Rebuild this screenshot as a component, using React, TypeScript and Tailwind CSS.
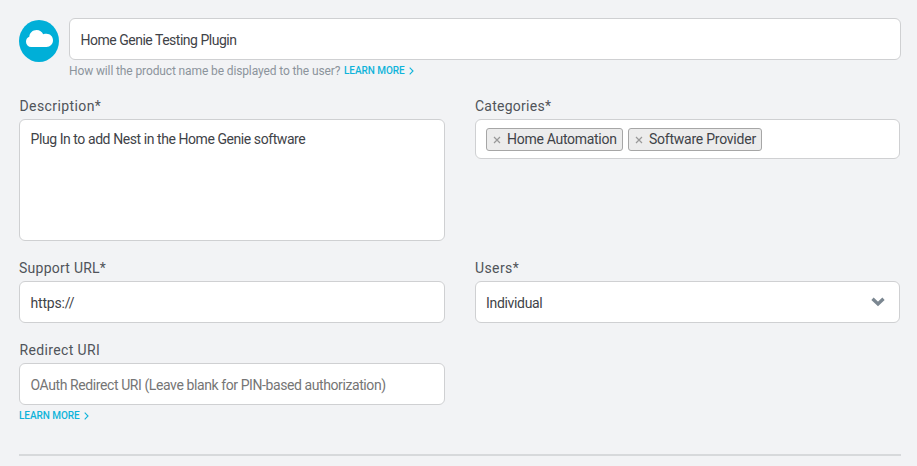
import React from "react";

function Label({ children, className = "" }: { children: React.ReactNode; className?: string }) {
  return <div className={`h-6 whitespace-nowrap text-[14px] leading-[23px] text-[#50545a] ${className}`}>{children}</div>;
}

const box = "flex w-full items-center rounded-[6px] border border-[#cfd0d2] bg-white whitespace-nowrap text-[14px] text-[#3f4348]";

function LearnMore() {
  return (
    <span className="inline-flex items-center gap-[4px] text-[10px] font-medium leading-[12px] text-[#0fb3da]">
      <span className="tracking-[-0.05px]">LEARN MORE</span>
      <svg width="5" height="8" viewBox="0 0 5 8" fill="none" stroke="currentColor" strokeWidth="1.1">
        <path d="M0.7 0.7 4 4 0.7 7.3" />
      </svg>
    </span>
  );
}

function Tag({ children, className }: { children: string; className: string }) {
  return (
    <span className={`flex h-[23px] items-center rounded-[3px] border border-[#a6a6a6] bg-[#ececec] pl-[6px] ${className}`}>
      <svg width="8" height="8" viewBox="0 0 8 8" stroke="#999" strokeWidth="1.2" className="mr-[6px] mt-px shrink-0">
        <path d="M1 1 7 7M7 1 1 7" />
      </svg>
      {children}
    </span>
  );
}

export default function App() {
  return (
    <main className="h-[466px] w-[917px] overflow-hidden bg-[#f2f3f5] pl-[19px] pr-4 pt-[18px] font-['Roboto','Liberation_Sans',sans-serif]">
      <header className="flex h-[77px]">
        <div className="mt-[2px] flex h-[42px] w-10 shrink-0 items-center justify-center rounded-[50%] bg-[#00afd8]">
          <svg width="27" height="17" viewBox="0 0 27 17" fill="white" className="mb-[5px]">
            <path d="M5.2 17A5.2 5.2 0 0 1 0 11.8C0 9.4 1.3 7.5 3.3 6.8C3.5 2.9 6.7 0 10.6 0C13.7 0 16 1.6 17.2 4.3C18.3 3.9 19.4 3.8 20.5 3.8C24.2 3.8 27 6.7 27 10.3C27 14.1 24.2 17 20.5 17Z" />
          </svg>
        </div>
        <div className="ml-[10px] w-[832px]">
          <div className={`${box} h-[42px] pl-[10.5px] pt-[3px] tracking-[-0.49px]`}>Home Genie Testing Plugin</div>
          <div className="flex h-[21px] items-center whitespace-nowrap text-[12px] text-[#8c949c]">
            <span className="mr-[3px] w-[272px] tracking-[-0.12px]">How will the product name be displayed to the user?</span>
            <LearnMore />
          </div>
        </div>
      </header>

      <div className="grid w-[881px] grid-cols-[426px_425px] gap-x-[30px]">
        <div className="h-[162px]">
          <Label className="pl-[0.5px] tracking-[0.4px]">Description*</Label>
          <div className={`${box} h-[122px] items-start pl-[10.5px] pt-[9px] leading-[20px] tracking-[-0.43px]`}>Plug In to add Nest in the Home Genie software</div>
        </div>
        <div>
          <Label className="tracking-[0.25px]">Categories*</Label>
          <div className={`${box} h-[40px] gap-[5px] pl-[10px]`}>
            <Tag className="w-[137px] tracking-[-0.29px]">Home Automation</Tag>
            <Tag className="w-[134px] tracking-[-0.24px]">Software Provider</Tag>
          </div>
        </div>
        <div className="h-[82px]">
          <Label className="tracking-[0.25px]">Support URL*</Label>
          <div className={`${box} h-[42px] pl-[10.5px] pt-[3px] tracking-[-0.2px]`}>https://</div>
        </div>
        <div>
          <Label className="tracking-[0.4px]">Users*</Label>
          <div className={`${box} h-[42px] justify-between pl-[10px] pr-[14px]`}>
            <span className="pt-[3px] tracking-[-0.32px]">Individual</span>
            <svg width="14" height="10" viewBox="0 0 14 10" fill="none" stroke="#7b8791" strokeWidth="3.3">
              <path d="M1.5 1.7 7 7 12.5 1.7" />
            </svg>
          </div>
        </div>
        <div>
          <Label className="pl-[0.5px] tracking-[0.37px]">Redirect URI</Label>
          <div className={`${box} h-[42px] pl-[10.5px] pt-[3px] tracking-[-0.41px] text-[#757575]`}>OAuth Redirect URI (Leave blank for PIN-based authorization)</div>
          <div className="flex h-[21px] items-center"><LearnMore /></div>
        </div>
      </div>
      <div className="mt-[28px] h-[2px] w-[882px] bg-[#d7d9db]" />
    </main>
  );
}
